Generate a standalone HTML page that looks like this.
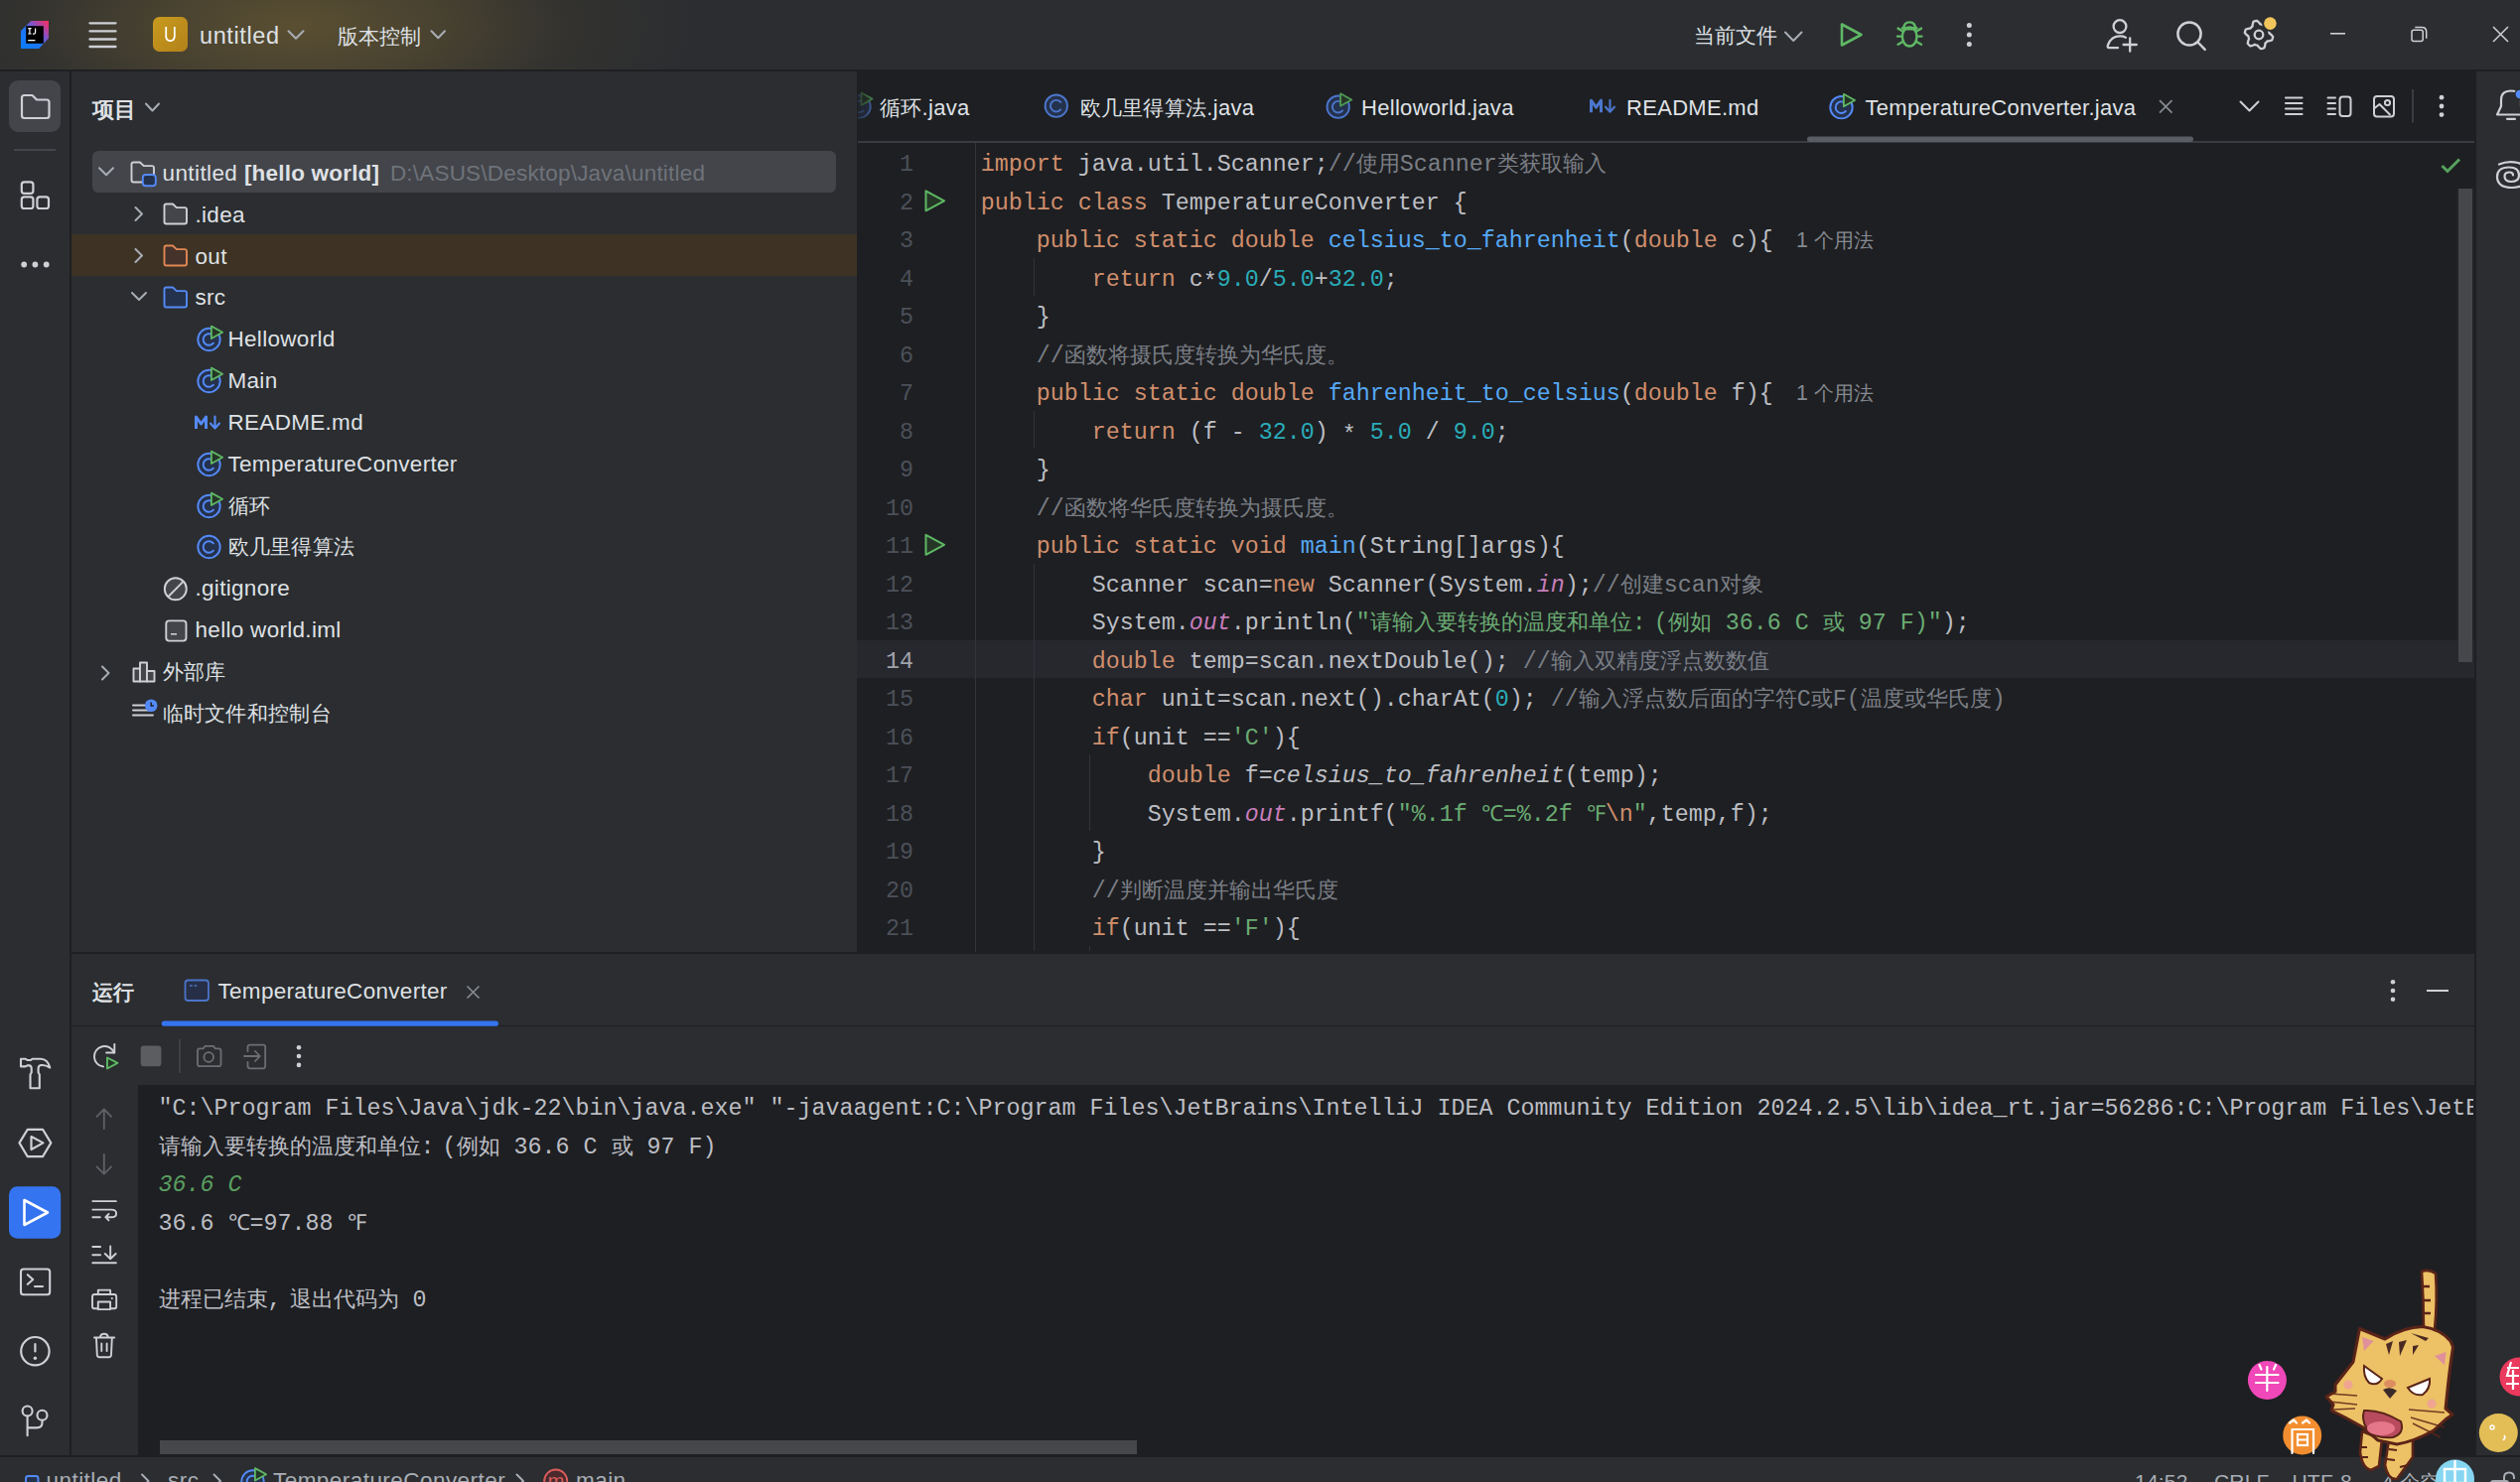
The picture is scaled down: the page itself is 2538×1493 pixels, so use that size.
<!DOCTYPE html><html><head><meta charset="utf-8"><style>
html,body{margin:0;padding:0;}
body{width:2538px;height:1493px;overflow:hidden;position:relative;background:#2B2D30;font-family:"Liberation Sans", sans-serif;}
.cj{font-size:0.935em;}
.mcj{font-size:22.1px;}
svg{overflow:visible}
</style></head><body>
<div style="position:absolute;left:0;top:0;width:2538px;height:70px;background:#2B2D30"></div>
<div style="position:absolute;left:0;top:0;width:2538px;height:70px;background:radial-gradient(ellipse 400px 160px at 300px 25px, rgba(100,86,50,0.82) 0%, rgba(92,80,48,0.6) 35%, rgba(75,66,44,0.25) 68%, rgba(60,55,40,0.0) 100%)"></div>
<div style="position:absolute;left:0px;top:70px;width:2538px;height:2px;background:#1E1F22;"></div>
<div style="position:absolute;left:0px;top:72px;width:70px;height:1396px;background:#2B2D30;"></div>
<div style="position:absolute;left:70px;top:72px;width:2px;height:1396px;background:#1E1F22;"></div>
<div style="position:absolute;left:72px;top:72px;width:791px;height:887px;background:#2B2D30;"></div>
<div style="position:absolute;left:863px;top:70px;width:1629px;height:889px;background:#1E1F22;"></div>
<div style="position:absolute;left:2492px;top:72px;width:2px;height:1396px;background:#1E1F22;"></div>
<div style="position:absolute;left:2494px;top:72px;width:44px;height:1396px;background:#2B2D30;"></div>
<div style="position:absolute;left:72px;top:959px;width:2420px;height:2px;background:#1E1F22;"></div>
<div style="position:absolute;left:72px;top:961px;width:2420px;height:72px;background:#2B2D30;"></div>
<div style="position:absolute;left:72px;top:1033px;width:2420px;height:1px;background:#1E1F22;"></div>
<div style="position:absolute;left:72px;top:1034px;width:2420px;height:59px;background:#2B2D30;"></div>
<div style="position:absolute;left:72px;top:1093px;width:2420px;height:374px;background:#1E1F22;"></div>
<div style="position:absolute;left:72px;top:1093px;width:67px;height:374px;background:#2B2D30;"></div>
<div style="position:absolute;left:0px;top:1466px;width:2538px;height:2px;background:#1E1F22;"></div>
<div style="position:absolute;left:0px;top:1468px;width:2538px;height:25px;background:#2B2D30;"></div>
<div style="position:absolute;left:72px;top:236px;width:791px;height:42px;background:#3D3223;"></div>
<div style="position:absolute;left:864px;top:142px;width:1628px;height:2px;background:#393B40;"></div>
<div style="position:absolute;left:2474px;top:190px;width:18px;height:478px;background:#222327;"></div>
<div style="position:absolute;left:863px;top:644.8px;width:1629px;height:38.5px;background:#26282E;"></div>
<div style="position:absolute;left:982px;top:144px;width:1px;height:815px;background:#313438;"></div>
<div style="position:absolute;left:1040.5px;top:259.8px;width:1.5px;height:38.5px;background:#313438;"></div>
<div style="position:absolute;left:1040.5px;top:413.8px;width:1.5px;height:38.5px;background:#313438;"></div>
<div style="position:absolute;left:1040.5px;top:567.8px;width:1.5px;height:390.2px;background:#313438;"></div>
<div style="position:absolute;left:1096.5px;top:760.3px;width:1.5px;height:77.0px;background:#313438;"></div>
<div style="position:absolute;left:1096.5px;top:952.8px;width:1.5px;height:5.2px;background:#313438;"></div>
<div style="position:absolute;left:2476px;top:190px;width:14px;height:477px;background:#46474A;"></div>
<div style="position:absolute;left:161px;top:1451px;width:984px;height:14px;background:#46474A;"></div>
<svg style="position:absolute;left:0;top:0" width="2538" height="1493" fill="none"><defs><linearGradient id="ijg" x1="0" y1="1" x2="1" y2="0"><stop offset="0" stop-color="#087CFA"/><stop offset="0.42" stop-color="#1E76F4"/><stop offset="0.68" stop-color="#8D4EBF"/><stop offset="1" stop-color="#FF2B58"/></linearGradient></defs><path d="M31.2 21 H49 V38.6 L39.2 49 H21 V31 Z" fill="url(#ijg)"/><rect x="26.2" y="26.2" width="17.6" height="17.6" fill="#000"/><path d="M28.2 28.6 h3.4 M29.9 28.6 v5.4 M28.2 34 h3.4 M35.6 28.4 v4.2 q0 1.6 -1.6 1.6 h-1" stroke="#fff" stroke-width="1.2"/><rect x="28.2" y="40" width="7.2" height="1.3" fill="#fff"/><line x1="90.5" y1="23.3" x2="116.5" y2="23.3" stroke="#CED0D6" stroke-width="2.3" stroke-linecap="round"/><line x1="90.5" y1="31.4" x2="116.5" y2="31.4" stroke="#CED0D6" stroke-width="2.3" stroke-linecap="round"/><line x1="90.5" y1="39.5" x2="116.5" y2="39.5" stroke="#CED0D6" stroke-width="2.3" stroke-linecap="round"/><line x1="90.5" y1="47.0" x2="116.5" y2="47.0" stroke="#CED0D6" stroke-width="2.3" stroke-linecap="round"/><defs><linearGradient id="ug" x1="0" y1="0" x2="1" y2="1"><stop offset="0" stop-color="#C89B1E"/><stop offset="1" stop-color="#B3811A"/></linearGradient></defs><rect x="154" y="17" width="35" height="35" rx="6.5" fill="url(#ug)"/><path d="M290.5 31.3 L298.0 38.8 L305.5 31.3" stroke="#A8ADB5" stroke-width="2" stroke-linecap="round" stroke-linejoin="round"/><path d="M434.5 31.3 L441.25 38.3 L448.0 31.3" stroke="#A8ADB5" stroke-width="2" stroke-linecap="round" stroke-linejoin="round"/><path d="M147 104.5 L153.5 111.5 L160 104.5" stroke="#A8ADB5" stroke-width="2" stroke-linecap="round" stroke-linejoin="round"/><path d="M1798 32.5 L1806.25 41.0 L1814.5 32.5" stroke="#A8ADB5" stroke-width="2" stroke-linecap="round" stroke-linejoin="round"/><path d="M1855 24.5 L1874.5 35 L1855 45.5 Z" stroke="#5FB865" stroke-width="2.6" stroke-linejoin="round"/><g stroke="#5FB865" stroke-width="2.4" stroke-linecap="round"><ellipse cx="1923.2" cy="37" rx="7.3" ry="9.5"/><path d="M1917.3 29.2 q0 -6.8 5.9 -6.8 q5.9 0 5.9 6.8 z"/><path d="M1916 28.3 h14.4"/><path d="M1911 36.6 h5 M1930.5 36.6 h5 M1911.6 28.6 l4.4 2.6 M1935 28.6 l-4.4 2.6 M1911.6 44.8 l4.4 -2.6 M1935 44.8 l-4.4 -2.6"/></g><circle cx="1983.3" cy="25.4" r="2.5" fill="#CED0D6"/><circle cx="1983.3" cy="35" r="2.5" fill="#CED0D6"/><circle cx="1983.3" cy="44.5" r="2.5" fill="#CED0D6"/><g stroke="#CED0D6" stroke-width="2.3" stroke-linecap="round" fill="none"><circle cx="2135" cy="26.6" r="6.4"/><path d="M2124.2 48.2 q-2.3 0 -1.1 -3.2 q3.4 -8.6 12 -8.6 q3.2 0 5.8 1.3 M2124.2 48.2 h8.8"/><path d="M2145.2 38.4 v13.3 M2138.6 45 h13.2"/></g><g stroke="#CED0D6" stroke-width="2.5" stroke-linecap="round" fill="none"><circle cx="2205" cy="34" r="11.6"/><path d="M2213.5 42.5 l7.2 7.4"/></g><polygon points="2287.5,35.0 2289.2,36.9 2288.8,38.7 2288.2,40.5 2285.8,41.2 2283.5,41.5 2282.6,42.6 2281.5,43.5 2281.2,45.8 2280.5,48.2 2278.7,48.8 2276.9,49.2 2275.0,47.5 2273.6,45.6 2272.2,45.3 2270.9,44.9 2268.8,45.8 2266.3,46.3 2264.9,45.1 2263.7,43.7 2264.2,41.2 2265.1,39.1 2264.7,37.8 2264.4,36.4 2262.5,35.0 2260.8,33.1 2261.2,31.3 2261.8,29.5 2264.2,28.8 2266.5,28.5 2267.4,27.4 2268.5,26.5 2268.8,24.2 2269.5,21.8 2271.3,21.2 2273.1,20.8 2275.0,22.5 2276.4,24.4 2277.8,24.7 2279.1,25.1 2281.2,24.2 2283.7,23.7 2285.1,24.9 2286.3,26.3 2285.8,28.7 2284.9,30.9 2285.3,32.2 2285.6,33.6" stroke="#CED0D6" stroke-width="2.3" stroke-linejoin="round"/><circle cx="2275" cy="35" r="4.3" stroke="#CED0D6" stroke-width="2.3"/><circle cx="2286.4" cy="23.6" r="8.4" fill="#2B2D30"/><circle cx="2286.4" cy="23.6" r="6.3" fill="#F2C55C"/><line x1="2347" y1="33.8" x2="2362" y2="33.8" stroke="#CED0D6" stroke-width="1.6"/><g stroke="#CED0D6" stroke-width="1.5" fill="none"><rect x="2429" y="30.3" width="11.2" height="11.2" rx="2"/><path d="M2432.3 27.5 h6.8 q4.6 0 4.6 4.6 v6.6"/></g><path d="M2511 27 L2526 42 M2526 27 L2511 42" stroke="#CED0D6" stroke-width="1.5"/><rect x="9" y="81" width="52" height="52" rx="9" fill="#43454A"/><path d="M22 98.5 q0 -2.5 2.5 -2.5 h8 l4.5 4.5 h10 q2.5 0 2.5 2.5 v13.5 q0 2.5 -2.5 2.5 h-22.5 q-2.5 0 -2.5 -2.5 z" stroke="#CED0D6" stroke-width="2.2" stroke-linejoin="round"/><line x1="14" y1="151" x2="56" y2="151" stroke="#43454A" stroke-width="2"/><rect x="21.8" y="183.3" width="11.6" height="11.6" rx="2.6" stroke="#CED0D6" stroke-width="2.2"/><rect x="21.8" y="198.4" width="11.6" height="11.6" rx="2.6" stroke="#CED0D6" stroke-width="2.2"/><rect x="37.4" y="198.4" width="11.6" height="11.6" rx="2.6" stroke="#CED0D6" stroke-width="2.2"/><circle cx="24.2" cy="266.5" r="2.9" fill="#CED0D6"/><circle cx="35.4" cy="266.5" r="2.9" fill="#CED0D6"/><circle cx="46.7" cy="266.5" r="2.9" fill="#CED0D6"/><rect x="93" y="152" width="749" height="42" rx="6" fill="#43454A"/><path d="M100 169.3 l7 7 l7 -7" stroke="#A8ADB5" stroke-width="2" stroke-linecap="round" stroke-linejoin="round"/><path d="M132.5 165.5 q0 -2 2 -2 h6.5 l3.8 3.6 h8.2 q2 0 2 2 v12.4 q0 2 -2 2 h-18.5 q-2 0 -2 -2 z" fill="none" stroke="#CED0D6" stroke-width="1.9" stroke-linejoin="round"/><rect x="143.8" y="176" width="13" height="11.2" rx="3" fill="#25324D" stroke="#548AF7" stroke-width="1.9"/><rect x="138" y="172.5" width="6" height="9" fill="#2B2D30" opacity="0"/><path d="M136.5 209 l6.5 6.5 l-6.5 6.5" stroke="#A8ADB5" stroke-width="2" stroke-linecap="round" stroke-linejoin="round"/><path d="M165.5 207.5 q0 -2 2 -2 h6.5 l3.8 3.6 h8.2 q2 0 2 2 v12.4 q0 2 -2 2 h-18.5 q-2 0 -2 -2 z" fill="#43454A" stroke="#CED0D6" stroke-width="1.9" stroke-linejoin="round"/><path d="M136.5 251 l6.5 6.5 l-6.5 6.5" stroke="#A8ADB5" stroke-width="2" stroke-linecap="round" stroke-linejoin="round"/><path d="M165.5 249.5 q0 -2 2 -2 h6.5 l3.8 3.6 h8.2 q2 0 2 2 v12.4 q0 2 -2 2 h-18.5 q-2 0 -2 -2 z" fill="#45322B" stroke="#E08855" stroke-width="1.9" stroke-linejoin="round"/><path d="M133 295 l7 7 l7 -7" stroke="#A8ADB5" stroke-width="2" stroke-linecap="round" stroke-linejoin="round"/><path d="M165.5 291.5 q0 -2 2 -2 h6.5 l3.8 3.6 h8.2 q2 0 2 2 v12.4 q0 2 -2 2 h-18.5 q-2 0 -2 -2 z" fill="#25324D" stroke="#548AF7" stroke-width="1.9" stroke-linejoin="round"/><circle cx="210.5" cy="342" r="11.2" fill="#25324D" stroke="#548AF7" stroke-width="1.9"/><path d="M214.94 338.27 A5.8 5.8 0 1 0 214.94 345.73" stroke="#548AF7" stroke-width="1.9" stroke-linecap="round"/><path d="M212.9 328.6 L224.1 334.8 L212.9 341.0 Z" fill="#253627" stroke="#5FB865" stroke-width="1.8" stroke-linejoin="round"/><circle cx="210.5" cy="384" r="11.2" fill="#25324D" stroke="#548AF7" stroke-width="1.9"/><path d="M214.94 380.27 A5.8 5.8 0 1 0 214.94 387.73" stroke="#548AF7" stroke-width="1.9" stroke-linecap="round"/><path d="M212.9 370.6 L224.1 376.8 L212.9 383.0 Z" fill="#253627" stroke="#5FB865" stroke-width="1.8" stroke-linejoin="round"/><circle cx="210.5" cy="468" r="11.2" fill="#25324D" stroke="#548AF7" stroke-width="1.9"/><path d="M214.94 464.27 A5.8 5.8 0 1 0 214.94 471.73" stroke="#548AF7" stroke-width="1.9" stroke-linecap="round"/><path d="M212.9 454.6 L224.1 460.8 L212.9 467.0 Z" fill="#253627" stroke="#5FB865" stroke-width="1.8" stroke-linejoin="round"/><circle cx="210.5" cy="510" r="11.2" fill="#25324D" stroke="#548AF7" stroke-width="1.9"/><path d="M214.94 506.27 A5.8 5.8 0 1 0 214.94 513.73" stroke="#548AF7" stroke-width="1.9" stroke-linecap="round"/><path d="M212.9 496.6 L224.1 502.8 L212.9 509.0 Z" fill="#253627" stroke="#5FB865" stroke-width="1.8" stroke-linejoin="round"/><circle cx="210.5" cy="551" r="11.2" fill="#25324D" stroke="#548AF7" stroke-width="1.9"/><path d="M214.94 547.27 A5.8 5.8 0 1 0 214.94 554.73" stroke="#548AF7" stroke-width="1.9" stroke-linecap="round"/><path d="M197.5 432 v-12 l5 7 l5 -7 v12" stroke="#548AF7" stroke-width="3" stroke-linejoin="round"/><path d="M216.5 419.5 v11.5 M212 426.5 l4.5 5 l4.5 -5" stroke="#548AF7" stroke-width="2.1" stroke-linecap="round" stroke-linejoin="round"/><circle cx="176.8" cy="593.3" r="11" fill="#43454A" stroke="#CED0D6" stroke-width="1.9"/><path d="M169.5 601 L184.5 585.8" stroke="#CED0D6" stroke-width="1.9"/><rect x="167.3" y="625.4" width="20.2" height="20.2" rx="3" fill="#43454A" stroke="#CED0D6" stroke-width="1.9"/><path d="M172 638.8 h6" stroke="#CED0D6" stroke-width="1.6"/><path d="M103 671.5 l6.5 6.5 l-6.5 6.5" stroke="#A8ADB5" stroke-width="2" stroke-linecap="round" stroke-linejoin="round"/><g stroke="#CED0D6" stroke-width="1.9" stroke-linejoin="round" fill="#43454A"><rect x="134.5" y="673.5" width="6.5" height="13"/><rect x="141" y="667.5" width="7" height="19"/><rect x="148" y="676" width="7.5" height="10.5"/></g><g stroke="#CED0D6" stroke-width="1.9" stroke-linecap="round"><path d="M134 710.5 h12 M134 715.5 h17 M134 720.5 h20"/></g><circle cx="152.2" cy="710.8" r="6.3" fill="#548AF7"/><path d="M152.2 707.5 v3.6 h2.6" stroke="#1E1F22" stroke-width="1.5" fill="none"/><defs><clipPath id="tabclip"><rect x="864" y="80" width="40" height="50"/></clipPath><linearGradient id="tabfade" x1="0" y1="0" x2="1" y2="0"><stop offset="0" stop-color="#fff" stop-opacity="0"/><stop offset="1" stop-color="#fff" stop-opacity="1"/></linearGradient><mask id="tabmask"><rect x="856" y="80" width="24" height="50" fill="url(#tabfade)"/></mask></defs><g clip-path="url(#tabclip)" mask="url(#tabmask)" opacity="0.75"><circle cx="865.5" cy="107.5" r="11.2" fill="#25324D" stroke="#4B76CC" stroke-width="1.9"/><path d="M869.9 103.8 A5.8 5.8 0 1 0 869.9 111.2" stroke="#4B76CC" stroke-width="1.9"/><path d="M867.5 93.5 L878.5 99.6 L867.5 106 Z" fill="#253627" stroke="#4E9A55" stroke-width="1.8" stroke-linejoin="round"/></g><circle cx="1063.8" cy="106.7" r="11.2" fill="#25324D" stroke="#4B76CC" stroke-width="1.9"/><path d="M1068.24 102.97 A5.8 5.8 0 1 0 1068.24 110.43" stroke="#4B76CC" stroke-width="1.9" stroke-linecap="round"/><circle cx="1347.7" cy="107.7" r="11.2" fill="#25324D" stroke="#4B76CC" stroke-width="1.9"/><path d="M1352.14 103.97 A5.8 5.8 0 1 0 1352.14 111.43" stroke="#4B76CC" stroke-width="1.9" stroke-linecap="round"/><path d="M1350.1000000000001 94.3 L1361.3 100.5 L1350.1000000000001 106.7 Z" fill="#253627" stroke="#4E9A55" stroke-width="1.8" stroke-linejoin="round"/><path d="M1602.5 113.2 v-12 l5 7 l5 -7 v12" stroke="#4B76CC" stroke-width="3" stroke-linejoin="round"/><path d="M1621.5 100.7 v11.5 M1617 107.7 l4.5 5 l4.5 -5" stroke="#4B76CC" stroke-width="2.1" stroke-linecap="round" stroke-linejoin="round"/><circle cx="1854.5" cy="108.2" r="11.2" fill="#25324D" stroke="#548AF7" stroke-width="1.9"/><path d="M1858.94 104.47 A5.8 5.8 0 1 0 1858.94 111.93" stroke="#548AF7" stroke-width="1.9" stroke-linecap="round"/><path d="M1856.9 94.8 L1868.1 101.0 L1856.9 107.2 Z" fill="#253627" stroke="#5FB865" stroke-width="1.8" stroke-linejoin="round"/><path d="M2175 101.2 l12.5 12.5 M2187.5 101.2 l-12.5 12.5" stroke="#868A91" stroke-width="1.7"/><rect x="1820" y="137.5" width="389" height="5.5" rx="2.75" fill="#5A5D63"/><path d="M2256.5 102.5 l9 9 l9 -9" stroke="#CED0D6" stroke-width="2" stroke-linecap="round" stroke-linejoin="round"/><g stroke="#CED0D6" stroke-width="2.1" stroke-linecap="round"><path d="M2302 98.5 h16.5 M2302 104 h16.5 M2302 109.5 h16.5 M2302 115 h16.5"/></g><g stroke="#CED0D6" stroke-width="2" stroke-linecap="round"><path d="M2344.5 98.5 h7.5 M2344.5 104 h7.5 M2344.5 109.5 h7.5 M2344.5 115 h7.5"/><rect x="2356.5" y="97.5" width="11" height="19.5" rx="3"/></g><g stroke="#CED0D6" stroke-width="2" stroke-linejoin="round"><rect x="2391" y="97" width="20" height="20.5" rx="3"/><circle cx="2404.5" cy="103.5" r="2.6"/><path d="M2391.5 109 l5 -4 l11 11"/></g><line x1="2430" y1="90" x2="2430" y2="123.5" stroke="#43454A" stroke-width="1.6"/><circle cx="2459" cy="98.2" r="2.4" fill="#CED0D6"/><circle cx="2459" cy="107" r="2.4" fill="#CED0D6"/><circle cx="2459" cy="115.6" r="2.4" fill="#CED0D6"/><path d="M2459.5 167 l5.5 5.5 l12 -12" stroke="#55A35C" stroke-width="3"/><path d="M932.5 192.29999999999998 L951 202.29999999999998 L932.5 212.29999999999998 Z" fill="#253627" stroke="#5FB865" stroke-width="2" stroke-linejoin="round"/><path d="M932.5 538.8 L951 548.8 L932.5 558.8 Z" fill="#253627" stroke="#5FB865" stroke-width="2" stroke-linejoin="round"/><path d="M21 1066.8 H25.8 L27.5 1068 H31 L32.5 1066.8 H41 Q48 1066.9 50.3 1075.6 Q46 1072.8 42 1073 Q38.8 1073.2 38.6 1076 V1080.5 L39.8 1082.5 V1096.3 H30.5 V1082.5 L31.7 1080.5 V1076 Q31.3 1073.6 29.5 1073.4 H27.5 L25.8 1074.4 H21 Z" stroke="#CED0D6" stroke-width="2.1" stroke-linejoin="round"/><g stroke="#CED0D6" stroke-width="2.2" stroke-linejoin="round"><path d="M19.5 1151.4 L27.8 1137.8 H43 L51.3 1151.4 L43 1165.2 H27.8 Z"/><path d="M31.5 1145 L43.5 1151.4 L31.5 1158 Z"/></g><rect x="9" y="1195.2" width="52.2" height="52.5" rx="8.5" fill="#3574F0"/><path d="M24.5 1209 L48 1221.5 L24.5 1234 Z" stroke="#FFFFFF" stroke-width="2.6" stroke-linejoin="round"/><g stroke="#CED0D6" stroke-width="2.1" stroke-linecap="round" stroke-linejoin="round"><rect x="21" y="1278.5" width="29.2" height="25.8" rx="2.8"/><path d="M27.8 1284.2 l5.4 4.8 l-5.4 4.8 M35 1296 h8"/></g><g stroke="#CED0D6" stroke-width="2.2" stroke-linecap="round"><circle cx="35.4" cy="1361.2" r="14.2"/><path d="M35.4 1354 v7.5"/></g><circle cx="35.4" cy="1368.2" r="1.7" fill="#CED0D6"/><g stroke="#CED0D6" stroke-width="2.1" stroke-linecap="round" fill="none"><circle cx="27.6" cy="1421.5" r="5"/><circle cx="42.5" cy="1425.8" r="5"/><path d="M27.6 1426.5 v19.8 M27.6 1438.4 h9.5 q5.4 0 5.4 -5.4 v-2.2"/></g><rect x="186.5" y="987.5" width="23.5" height="20.5" rx="3" fill="#262F45" stroke="#4C74C8" stroke-width="1.8"/><path d="M191 993 h2.8 M195.5 993 h2.8" stroke="#4C74C8" stroke-width="1.5"/><path d="M470.5 993.5 l12 12 M482.5 993.5 l-12 12" stroke="#868A91" stroke-width="1.7"/><rect x="162.8" y="1028.6" width="339.2" height="5.2" rx="2.6" fill="#3574F0"/><circle cx="2410" cy="989.3" r="2.3" fill="#CED0D6"/><circle cx="2410" cy="998" r="2.3" fill="#CED0D6"/><circle cx="2410" cy="1006.8" r="2.3" fill="#CED0D6"/><line x1="2444" y1="998" x2="2466" y2="998" stroke="#CED0D6" stroke-width="2"/><path d="M104 1074.5 A10.3 10.3 0 1 1 114.8 1060.5" stroke="#CED0D6" stroke-width="1.9" stroke-linecap="round"/><path d="M115.3 1052 v8.5 h-8.2" stroke="#CED0D6" stroke-width="1.9" stroke-linecap="round" stroke-linejoin="round"/><path d="M108 1065.5 L118.4 1070.8 L108 1076.5 Z" fill="#253627" stroke="#5FB865" stroke-width="1.9" stroke-linejoin="round"/><rect x="141.7" y="1053.5" width="20.7" height="20.8" rx="3" fill="#5C5D60"/><line x1="181" y1="1047" x2="181" y2="1081" stroke="#43454A" stroke-width="1.6"/><g stroke="#6C6E73" stroke-width="1.8" stroke-linejoin="round"><path d="M199 1058.5 q0 -2.2 2.2 -2.2 h3.6 l1.8 -2.4 h8.3 l1.8 2.4 h3.6 q2.2 0 2.2 2.2 v13.4 q0 2.2 -2.2 2.2 h-19.1 q-2.2 0 -2.2 -2.2 z"/><circle cx="210.2" cy="1065" r="4.8"/></g><g stroke="#6C6E73" stroke-width="1.8" stroke-linecap="round" stroke-linejoin="round"><path d="M249.5 1059 v-4.2 q0 -2.2 2.2 -2.2 h13.3 q2.2 0 2.2 2.2 v19.3 q0 2.2 -2.2 2.2 h-13.3 q-2.2 0 -2.2 -2.2 v-4.2 M246 1064 h15.8 M257 1059 l4.8 5 l-4.8 5"/></g><circle cx="301" cy="1055.2" r="2.3" fill="#CED0D6"/><circle cx="301" cy="1064" r="2.3" fill="#CED0D6"/><circle cx="301" cy="1072.9" r="2.3" fill="#CED0D6"/><g stroke="#5F6166" stroke-width="1.8" stroke-linecap="round" stroke-linejoin="round"><path d="M104.8 1137 v-19 M97.5 1124.8 l7.3 -7.3 l7.3 7.3"/><path d="M104.8 1162.8 v19.5 M97.5 1175.3 l7.3 7.3 l7.3 -7.3"/></g><g stroke="#CED0D6" stroke-width="1.9" stroke-linecap="round" stroke-linejoin="round"><path d="M93.3 1210.1 h23.6 M93.3 1218.6 h18.8 q5 0 5 3.8 q0 3.8 -5 3.8 h-5.6 M93.3 1226.2 h7.5 M109.5 1223 l-3.2 3.2 l3.2 3.2"/></g><g stroke="#CED0D6" stroke-width="1.9" stroke-linecap="round" stroke-linejoin="round"><path d="M93.3 1256 h7.8 M93.3 1264.2 h7.8 M93.3 1272.2 h23.6 M111.2 1255.5 v12.6 M105.8 1263 l5.4 5.3 l5.4 -5.3"/></g><g stroke="#CED0D6" stroke-width="1.9" stroke-linejoin="round"><path d="M98.8 1304 v-4.4 h12.3 v4.4 M98.8 1318.2 h-3.8 q-2 0 -2 -2 v-9.8 q0 -2.4 2.4 -2.4 h19.4 q2.4 0 2.4 2.4 v9.8 q0 2 -2 2 h-3.9"/><rect x="98.8" y="1311.5" width="12.3" height="7.6"/></g><circle cx="112.8" cy="1308" r="1.1" fill="#CED0D6"/><g stroke="#CED0D6" stroke-width="1.9" stroke-linecap="round" stroke-linejoin="round"><path d="M95 1347.5 h20.2 M101 1347.3 q0 -3.6 3.9 -3.6 q3.9 0 3.9 3.6 M97 1348 l0.8 17 q0.1 2.2 2.3 2.2 h9.6 q2.2 0 2.3 -2.2 l0.8 -17 M102.3 1353.5 v7.6 M107.6 1353.5 v7.6"/></g><g stroke="#A8ADB5" stroke-width="2" fill="none"><path d="M2522 1492 v-3.5 q0 -5 5 -5 q5 0 5 5 v1.5"/><rect x="2509" y="1492" width="17" height="12" rx="2"/></g><rect x="26" y="1487" width="12.5" height="12" rx="2.5" stroke="#548AF7" stroke-width="1.9" fill="#25324D"/><path d="M143 1485.5 l6.5 6.5 l-6.5 6.5" stroke="#A8ADB5" stroke-width="1.9" stroke-linecap="round" stroke-linejoin="round"/><path d="M215.5 1485.5 l6.5 6.5 l-6.5 6.5" stroke="#A8ADB5" stroke-width="1.9" stroke-linecap="round" stroke-linejoin="round"/><path d="M520.5 1485.5 l6.5 6.5 l-6.5 6.5" stroke="#A8ADB5" stroke-width="1.9" stroke-linecap="round" stroke-linejoin="round"/><circle cx="254.5" cy="1492.5" r="11.2" fill="#25324D" stroke="#548AF7" stroke-width="1.9"/><path d="M258.94 1488.77 A5.8 5.8 0 1 0 258.94 1496.23" stroke="#548AF7" stroke-width="1.9" stroke-linecap="round"/><path d="M256.9 1479.1 L268.1 1485.3 L256.9 1491.5 Z" fill="#253627" stroke="#5FB865" stroke-width="1.8" stroke-linejoin="round"/><circle cx="559.7" cy="1492" r="11.5" fill="#4A2A2C" stroke="#DB5C5C" stroke-width="1.9"/><g stroke="#CED0D6" stroke-width="2.2" stroke-linejoin="round" stroke-linecap="round"><path d="M2515 115.5 L2519 107 V100.5 Q2519 91.5 2529 91.5 Q2539 91.5 2539 100.5 V107 L2543 115.5 Z"/><path d="M2525 119.8 h8"/></g><circle cx="2537.8" cy="95" r="5.6" fill="#2B2D30"/><circle cx="2537.8" cy="95" r="4.2" fill="#548AF7"/><path d="M2517 165.5 Q2526 161.5 2536 164 Q2545 167 2545 177 Q2545 189 2530 189 Q2515 189 2515 178 Q2515 168.5 2527 168.5 Q2537 168.5 2537 176.5 Q2537 183 2529 183 Q2522.5 183 2522.5 177.5 Q2522.5 173.5 2527.5 173.5 Q2531 173.5 2531 176.5" stroke="#CED0D6" stroke-width="2.2" stroke-linecap="round"/></svg>
<div style="position:absolute;left:201px;top:20.11px;white-space:pre;font-family:'Liberation Sans', sans-serif;font-size:23.5px;line-height:32.9px;color:#DFE1E5;font-weight:normal;letter-spacing:0.6px;">untitled</div><div style="position:absolute;left:340px;top:20.56px;white-space:pre;font-family:'Liberation Sans', sans-serif;font-size:22.4px;line-height:31.36px;color:#DFE1E5;font-weight:normal;letter-spacing:0px;"><span class="cj">版本控制</span></div><div style="position:absolute;left:1706px;top:20.36px;white-space:pre;font-family:'Liberation Sans', sans-serif;font-size:22.4px;line-height:31.36px;color:#DFE1E5;font-weight:normal;letter-spacing:0px;"><span class="cj">当前文件</span></div><div style="position:absolute;left:154px;top:17px;width:35px;height:35px;line-height:35px;text-align:center;color:#fff;font-size:22px;font-family:'Liberation Sans',sans-serif;transform:scaleX(0.82)">U</div><div style="position:absolute;left:93px;top:93.63px;white-space:pre;font-family:'Liberation Sans', sans-serif;font-size:23px;line-height:32.2px;color:#DFE1E5;font-weight:bold;letter-spacing:0px;"><span class="cj">项目</span></div><div style="position:absolute;left:163.5px;top:158.95px;white-space:pre;font-family:'Liberation Sans', sans-serif;font-size:22.5px;line-height:31.5px;color:#DFE1E5;font-weight:normal;letter-spacing:0.4px;">untitled <b style="letter-spacing:0.2px">[hello world]</b> <span style="color:#6F737A;letter-spacing:0.2px;margin-left:4px">D:\ASUS\Desktop\Java\untitled</span></div><div style="position:absolute;left:196.5px;top:200.65px;white-space:pre;font-family:'Liberation Sans', sans-serif;font-size:22.5px;line-height:31.5px;color:#DFE1E5;font-weight:normal;letter-spacing:0.3px;">.idea</div><div style="position:absolute;left:196.5px;top:242.50px;white-space:pre;font-family:'Liberation Sans', sans-serif;font-size:22.5px;line-height:31.5px;color:#DFE1E5;font-weight:normal;letter-spacing:0.3px;">out</div><div style="position:absolute;left:196.5px;top:284.35px;white-space:pre;font-family:'Liberation Sans', sans-serif;font-size:22.5px;line-height:31.5px;color:#DFE1E5;font-weight:normal;letter-spacing:0.3px;">src</div><div style="position:absolute;left:229.5px;top:326.20px;white-space:pre;font-family:'Liberation Sans', sans-serif;font-size:22.5px;line-height:31.5px;color:#DFE1E5;font-weight:normal;letter-spacing:0.3px;">Helloworld</div><div style="position:absolute;left:229.5px;top:368.05px;white-space:pre;font-family:'Liberation Sans', sans-serif;font-size:22.5px;line-height:31.5px;color:#DFE1E5;font-weight:normal;letter-spacing:0.3px;">Main</div><div style="position:absolute;left:229.5px;top:409.90px;white-space:pre;font-family:'Liberation Sans', sans-serif;font-size:22.5px;line-height:31.5px;color:#DFE1E5;font-weight:normal;letter-spacing:0.3px;">README.md</div><div style="position:absolute;left:229.5px;top:451.75px;white-space:pre;font-family:'Liberation Sans', sans-serif;font-size:22.5px;line-height:31.5px;color:#DFE1E5;font-weight:normal;letter-spacing:0.3px;">TemperatureConverter</div><div style="position:absolute;left:229.5px;top:493.60px;white-space:pre;font-family:'Liberation Sans', sans-serif;font-size:22.5px;line-height:31.5px;color:#DFE1E5;font-weight:normal;letter-spacing:0.3px;"><span class="cj">循环</span></div><div style="position:absolute;left:229.5px;top:535.45px;white-space:pre;font-family:'Liberation Sans', sans-serif;font-size:22.5px;line-height:31.5px;color:#DFE1E5;font-weight:normal;letter-spacing:0.3px;"><span class="cj">欧几里得算法</span></div><div style="position:absolute;left:196.5px;top:577.30px;white-space:pre;font-family:'Liberation Sans', sans-serif;font-size:22.5px;line-height:31.5px;color:#DFE1E5;font-weight:normal;letter-spacing:0.3px;">.gitignore</div><div style="position:absolute;left:196.5px;top:619.15px;white-space:pre;font-family:'Liberation Sans', sans-serif;font-size:22.5px;line-height:31.5px;color:#DFE1E5;font-weight:normal;letter-spacing:0.3px;">hello world.iml</div><div style="position:absolute;left:163.5px;top:661.00px;white-space:pre;font-family:'Liberation Sans', sans-serif;font-size:22.5px;line-height:31.5px;color:#DFE1E5;font-weight:normal;letter-spacing:0.3px;"><span class="cj">外部库</span></div><div style="position:absolute;left:163.5px;top:702.85px;white-space:pre;font-family:'Liberation Sans', sans-serif;font-size:22.5px;line-height:31.5px;color:#DFE1E5;font-weight:normal;letter-spacing:0.3px;"><span class="cj">临时文件和控制台</span></div><div style="position:absolute;left:886px;top:93.68px;white-space:pre;font-family:'Liberation Sans', sans-serif;font-size:22px;line-height:30.8px;color:#DFE1E5;font-weight:normal;letter-spacing:0.3px;"><span class="cj">循环</span>.java</div><div style="position:absolute;left:1087.5px;top:93.68px;white-space:pre;font-family:'Liberation Sans', sans-serif;font-size:22px;line-height:30.8px;color:#DFE1E5;font-weight:normal;letter-spacing:0.3px;"><span class="cj">欧几里得算法</span>.java</div><div style="position:absolute;left:1371px;top:93.68px;white-space:pre;font-family:'Liberation Sans', sans-serif;font-size:22px;line-height:30.8px;color:#DFE1E5;font-weight:normal;letter-spacing:0.3px;">Helloworld.java</div><div style="position:absolute;left:1638px;top:93.68px;white-space:pre;font-family:'Liberation Sans', sans-serif;font-size:22px;line-height:30.8px;color:#DFE1E5;font-weight:normal;letter-spacing:0.3px;">README.md</div><div style="position:absolute;left:1878.5px;top:93.68px;white-space:pre;font-family:'Liberation Sans', sans-serif;font-size:22px;line-height:30.8px;color:#DFE1E5;font-weight:normal;letter-spacing:0.3px;">TemperatureConverter.java</div><div style="position:absolute;left:987.8px;top:150.15px;white-space:pre;font-family:'Liberation Mono', monospace;font-size:23.3333px;line-height:32.67px;color:#DFE1E5;font-weight:normal;letter-spacing:0px;"><span style="color:#CF8E6D">import</span><span style="color:#BCBEC4"> java.util.Scanner;</span><span style="color:#7A7E85">//<span class="mcj">使用</span>Scanner<span class="mcj">类获取输入</span></span></div><div style="position:absolute;left:906px;top:150.15px;white-space:pre;font-family:'Liberation Mono', monospace;font-size:23.3333px;line-height:32.67px;color:#4B5059;font-weight:normal;letter-spacing:0px;">1</div><div style="position:absolute;left:987.8px;top:188.65px;white-space:pre;font-family:'Liberation Mono', monospace;font-size:23.3333px;line-height:32.67px;color:#DFE1E5;font-weight:normal;letter-spacing:0px;"><span style="color:#CF8E6D">public class</span><span style="color:#BCBEC4"> TemperatureConverter {</span></div><div style="position:absolute;left:906px;top:188.65px;white-space:pre;font-family:'Liberation Mono', monospace;font-size:23.3333px;line-height:32.67px;color:#4B5059;font-weight:normal;letter-spacing:0px;">2</div><div style="position:absolute;left:987.8px;top:227.15px;white-space:pre;font-family:'Liberation Mono', monospace;font-size:23.3333px;line-height:32.67px;color:#DFE1E5;font-weight:normal;letter-spacing:0px;"><span style="color:#BCBEC4">    </span><span style="color:#CF8E6D">public static double</span><span style="color:#BCBEC4"> </span><span style="color:#56A8F5">celsius_to_fahrenheit</span><span style="color:#BCBEC4">(</span><span style="color:#CF8E6D">double</span><span style="color:#BCBEC4"> c){</span></div><div style="position:absolute;left:906px;top:227.15px;white-space:pre;font-family:'Liberation Mono', monospace;font-size:23.3333px;line-height:32.67px;color:#4B5059;font-weight:normal;letter-spacing:0px;">3</div><div style="position:absolute;left:987.8px;top:265.65px;white-space:pre;font-family:'Liberation Mono', monospace;font-size:23.3333px;line-height:32.67px;color:#DFE1E5;font-weight:normal;letter-spacing:0px;"><span style="color:#BCBEC4">        </span><span style="color:#CF8E6D">return</span><span style="color:#BCBEC4"> c<span style="position:relative;top:3px">*</span></span><span style="color:#2AACB8">9.0</span><span style="color:#BCBEC4">/</span><span style="color:#2AACB8">5.0</span><span style="color:#BCBEC4">+</span><span style="color:#2AACB8">32.0</span><span style="color:#BCBEC4">;</span></div><div style="position:absolute;left:906px;top:265.65px;white-space:pre;font-family:'Liberation Mono', monospace;font-size:23.3333px;line-height:32.67px;color:#4B5059;font-weight:normal;letter-spacing:0px;">4</div><div style="position:absolute;left:987.8px;top:304.15px;white-space:pre;font-family:'Liberation Mono', monospace;font-size:23.3333px;line-height:32.67px;color:#DFE1E5;font-weight:normal;letter-spacing:0px;"><span style="color:#BCBEC4">    }</span></div><div style="position:absolute;left:906px;top:304.15px;white-space:pre;font-family:'Liberation Mono', monospace;font-size:23.3333px;line-height:32.67px;color:#4B5059;font-weight:normal;letter-spacing:0px;">5</div><div style="position:absolute;left:987.8px;top:342.65px;white-space:pre;font-family:'Liberation Mono', monospace;font-size:23.3333px;line-height:32.67px;color:#DFE1E5;font-weight:normal;letter-spacing:0px;"><span style="color:#BCBEC4">    </span><span style="color:#7A7E85">//<span class="mcj">函数将摄氏度转换为华氏度。</span></span></div><div style="position:absolute;left:906px;top:342.65px;white-space:pre;font-family:'Liberation Mono', monospace;font-size:23.3333px;line-height:32.67px;color:#4B5059;font-weight:normal;letter-spacing:0px;">6</div><div style="position:absolute;left:987.8px;top:381.15px;white-space:pre;font-family:'Liberation Mono', monospace;font-size:23.3333px;line-height:32.67px;color:#DFE1E5;font-weight:normal;letter-spacing:0px;"><span style="color:#BCBEC4">    </span><span style="color:#CF8E6D">public static double</span><span style="color:#BCBEC4"> </span><span style="color:#56A8F5">fahrenheit_to_celsius</span><span style="color:#BCBEC4">(</span><span style="color:#CF8E6D">double</span><span style="color:#BCBEC4"> f){</span></div><div style="position:absolute;left:906px;top:381.15px;white-space:pre;font-family:'Liberation Mono', monospace;font-size:23.3333px;line-height:32.67px;color:#4B5059;font-weight:normal;letter-spacing:0px;">7</div><div style="position:absolute;left:987.8px;top:419.65px;white-space:pre;font-family:'Liberation Mono', monospace;font-size:23.3333px;line-height:32.67px;color:#DFE1E5;font-weight:normal;letter-spacing:0px;"><span style="color:#BCBEC4">        </span><span style="color:#CF8E6D">return</span><span style="color:#BCBEC4"> (f - </span><span style="color:#2AACB8">32.0</span><span style="color:#BCBEC4">) <span style="position:relative;top:3px">*</span> </span><span style="color:#2AACB8">5.0</span><span style="color:#BCBEC4"> / </span><span style="color:#2AACB8">9.0</span><span style="color:#BCBEC4">;</span></div><div style="position:absolute;left:906px;top:419.65px;white-space:pre;font-family:'Liberation Mono', monospace;font-size:23.3333px;line-height:32.67px;color:#4B5059;font-weight:normal;letter-spacing:0px;">8</div><div style="position:absolute;left:987.8px;top:458.15px;white-space:pre;font-family:'Liberation Mono', monospace;font-size:23.3333px;line-height:32.67px;color:#DFE1E5;font-weight:normal;letter-spacing:0px;"><span style="color:#BCBEC4">    }</span></div><div style="position:absolute;left:906px;top:458.15px;white-space:pre;font-family:'Liberation Mono', monospace;font-size:23.3333px;line-height:32.67px;color:#4B5059;font-weight:normal;letter-spacing:0px;">9</div><div style="position:absolute;left:987.8px;top:496.65px;white-space:pre;font-family:'Liberation Mono', monospace;font-size:23.3333px;line-height:32.67px;color:#DFE1E5;font-weight:normal;letter-spacing:0px;"><span style="color:#BCBEC4">    </span><span style="color:#7A7E85">//<span class="mcj">函数将华氏度转换为摄氏度。</span></span></div><div style="position:absolute;left:892px;top:496.65px;white-space:pre;font-family:'Liberation Mono', monospace;font-size:23.3333px;line-height:32.67px;color:#4B5059;font-weight:normal;letter-spacing:0px;">10</div><div style="position:absolute;left:987.8px;top:535.15px;white-space:pre;font-family:'Liberation Mono', monospace;font-size:23.3333px;line-height:32.67px;color:#DFE1E5;font-weight:normal;letter-spacing:0px;"><span style="color:#BCBEC4">    </span><span style="color:#CF8E6D">public static void</span><span style="color:#BCBEC4"> </span><span style="color:#56A8F5">main</span><span style="color:#BCBEC4">(String[]args){</span></div><div style="position:absolute;left:892px;top:535.15px;white-space:pre;font-family:'Liberation Mono', monospace;font-size:23.3333px;line-height:32.67px;color:#4B5059;font-weight:normal;letter-spacing:0px;">11</div><div style="position:absolute;left:987.8px;top:573.65px;white-space:pre;font-family:'Liberation Mono', monospace;font-size:23.3333px;line-height:32.67px;color:#DFE1E5;font-weight:normal;letter-spacing:0px;"><span style="color:#BCBEC4">        Scanner scan=</span><span style="color:#CF8E6D">new</span><span style="color:#BCBEC4"> Scanner(System.</span><span style="color:#C77DBB;font-style:italic">in</span><span style="color:#BCBEC4">);</span><span style="color:#7A7E85">//<span class="mcj">创建</span>scan<span class="mcj">对象</span></span></div><div style="position:absolute;left:892px;top:573.65px;white-space:pre;font-family:'Liberation Mono', monospace;font-size:23.3333px;line-height:32.67px;color:#4B5059;font-weight:normal;letter-spacing:0px;">12</div><div style="position:absolute;left:987.8px;top:612.15px;white-space:pre;font-family:'Liberation Mono', monospace;font-size:23.3333px;line-height:32.67px;color:#DFE1E5;font-weight:normal;letter-spacing:0px;"><span style="color:#BCBEC4">        System.</span><span style="color:#C77DBB;font-style:italic">out</span><span style="color:#BCBEC4">.println(</span><span style="color:#6AAB73">"<span class="mcj">请输入要转换的温度和单位</span><span style="display:inline-block;width:22px">:</span>(<span class="mcj">例如</span> 36.6 C <span class="mcj">或</span> 97 F)"</span><span style="color:#BCBEC4">);</span></div><div style="position:absolute;left:892px;top:612.15px;white-space:pre;font-family:'Liberation Mono', monospace;font-size:23.3333px;line-height:32.67px;color:#4B5059;font-weight:normal;letter-spacing:0px;">13</div><div style="position:absolute;left:987.8px;top:650.65px;white-space:pre;font-family:'Liberation Mono', monospace;font-size:23.3333px;line-height:32.67px;color:#DFE1E5;font-weight:normal;letter-spacing:0px;"><span style="color:#BCBEC4">        </span><span style="color:#CF8E6D">double</span><span style="color:#BCBEC4"> temp=scan.nextDouble(); </span><span style="color:#7A7E85">//<span class="mcj">输入双精度浮点数数值</span></span></div><div style="position:absolute;left:892px;top:650.65px;white-space:pre;font-family:'Liberation Mono', monospace;font-size:23.3333px;line-height:32.67px;color:#A1A3AB;font-weight:normal;letter-spacing:0px;">14</div><div style="position:absolute;left:987.8px;top:689.15px;white-space:pre;font-family:'Liberation Mono', monospace;font-size:23.3333px;line-height:32.67px;color:#DFE1E5;font-weight:normal;letter-spacing:0px;"><span style="color:#BCBEC4">        </span><span style="color:#CF8E6D">char</span><span style="color:#BCBEC4"> unit=scan.next().charAt(</span><span style="color:#2AACB8">0</span><span style="color:#BCBEC4">); </span><span style="color:#7A7E85">//<span class="mcj">输入浮点数后面的字符</span>C<span class="mcj">或</span>F(<span class="mcj">温度或华氏度</span>)</span></div><div style="position:absolute;left:892px;top:689.15px;white-space:pre;font-family:'Liberation Mono', monospace;font-size:23.3333px;line-height:32.67px;color:#4B5059;font-weight:normal;letter-spacing:0px;">15</div><div style="position:absolute;left:987.8px;top:727.65px;white-space:pre;font-family:'Liberation Mono', monospace;font-size:23.3333px;line-height:32.67px;color:#DFE1E5;font-weight:normal;letter-spacing:0px;"><span style="color:#BCBEC4">        </span><span style="color:#CF8E6D">if</span><span style="color:#BCBEC4">(unit ==</span><span style="color:#6AAB73">'C'</span><span style="color:#BCBEC4">){</span></div><div style="position:absolute;left:892px;top:727.65px;white-space:pre;font-family:'Liberation Mono', monospace;font-size:23.3333px;line-height:32.67px;color:#4B5059;font-weight:normal;letter-spacing:0px;">16</div><div style="position:absolute;left:987.8px;top:766.15px;white-space:pre;font-family:'Liberation Mono', monospace;font-size:23.3333px;line-height:32.67px;color:#DFE1E5;font-weight:normal;letter-spacing:0px;"><span style="color:#BCBEC4">            </span><span style="color:#CF8E6D">double</span><span style="color:#BCBEC4"> f=</span><span style="color:#BCBEC4;font-style:italic">celsius_to_fahrenheit</span><span style="color:#BCBEC4">(temp);</span></div><div style="position:absolute;left:892px;top:766.15px;white-space:pre;font-family:'Liberation Mono', monospace;font-size:23.3333px;line-height:32.67px;color:#4B5059;font-weight:normal;letter-spacing:0px;">17</div><div style="position:absolute;left:987.8px;top:804.65px;white-space:pre;font-family:'Liberation Mono', monospace;font-size:23.3333px;line-height:32.67px;color:#DFE1E5;font-weight:normal;letter-spacing:0px;"><span style="color:#BCBEC4">            System.</span><span style="color:#C77DBB;font-style:italic">out</span><span style="color:#BCBEC4">.printf(</span><span style="color:#6AAB73">"%.1f <span class="mcj">℃</span>=%.2f <span class="mcj">℉</span></span><span style="color:#CF8E6D">\n</span><span style="color:#6AAB73">"</span><span style="color:#BCBEC4">,temp,f);</span></div><div style="position:absolute;left:892px;top:804.65px;white-space:pre;font-family:'Liberation Mono', monospace;font-size:23.3333px;line-height:32.67px;color:#4B5059;font-weight:normal;letter-spacing:0px;">18</div><div style="position:absolute;left:987.8px;top:843.15px;white-space:pre;font-family:'Liberation Mono', monospace;font-size:23.3333px;line-height:32.67px;color:#DFE1E5;font-weight:normal;letter-spacing:0px;"><span style="color:#BCBEC4">        }</span></div><div style="position:absolute;left:892px;top:843.15px;white-space:pre;font-family:'Liberation Mono', monospace;font-size:23.3333px;line-height:32.67px;color:#4B5059;font-weight:normal;letter-spacing:0px;">19</div><div style="position:absolute;left:987.8px;top:881.65px;white-space:pre;font-family:'Liberation Mono', monospace;font-size:23.3333px;line-height:32.67px;color:#DFE1E5;font-weight:normal;letter-spacing:0px;"><span style="color:#BCBEC4">        </span><span style="color:#7A7E85">//<span class="mcj">判断温度并输出华氏度</span></span></div><div style="position:absolute;left:892px;top:881.65px;white-space:pre;font-family:'Liberation Mono', monospace;font-size:23.3333px;line-height:32.67px;color:#4B5059;font-weight:normal;letter-spacing:0px;">20</div><div style="position:absolute;left:987.8px;top:920.15px;white-space:pre;font-family:'Liberation Mono', monospace;font-size:23.3333px;line-height:32.67px;color:#DFE1E5;font-weight:normal;letter-spacing:0px;"><span style="color:#BCBEC4">        </span><span style="color:#CF8E6D">if</span><span style="color:#BCBEC4">(unit ==</span><span style="color:#6AAB73">'F'</span><span style="color:#BCBEC4">){</span></div><div style="position:absolute;left:892px;top:920.15px;white-space:pre;font-family:'Liberation Mono', monospace;font-size:23.3333px;line-height:32.67px;color:#4B5059;font-weight:normal;letter-spacing:0px;">21</div><div style="position:absolute;left:1809px;top:227.00px;white-space:pre;font-family:'Liberation Sans', sans-serif;font-size:21.5px;line-height:30.1px;color:#868A91;font-weight:normal;letter-spacing:0px;">1 <span class="cj">个用法</span></div><div style="position:absolute;left:1809px;top:380.60px;white-space:pre;font-family:'Liberation Sans', sans-serif;font-size:21.5px;line-height:30.1px;color:#868A91;font-weight:normal;letter-spacing:0px;">1 <span class="cj">个用法</span></div><div style="position:absolute;left:93px;top:984.27px;white-space:pre;font-family:'Liberation Sans', sans-serif;font-size:22.2px;line-height:31.08px;color:#DFE1E5;font-weight:bold;letter-spacing:0px;"><span class="cj">运行</span></div><div style="position:absolute;left:219.5px;top:982.75px;white-space:pre;font-family:'Liberation Sans', sans-serif;font-size:22.5px;line-height:31.5px;color:#DFE1E5;font-weight:normal;letter-spacing:0.3px;">TemperatureConverter</div><div style="position:absolute;left:0;top:0;width:2491px;height:1466px;overflow:hidden"><div style="position:absolute;left:159.5px;top:1101.45px;white-space:pre;font-family:'Liberation Mono', monospace;font-size:23.3333px;line-height:32.67px;color:#DFE1E5;font-weight:normal;letter-spacing:0px;"><span style="color:#BCBEC4">"C:\Program Files\Java\jdk-22\bin\java.exe" "-javaagent:C:\Program Files\JetBrains\IntelliJ IDEA Community Edition 2024.2.5\lib\idea_rt.jar=56286:C:\Program Files\JetBrains\IntelliJ IDEA Community Edition 2024.2.5\bin"</span></div><div style="position:absolute;left:159.5px;top:1139.95px;white-space:pre;font-family:'Liberation Mono', monospace;font-size:23.3333px;line-height:32.67px;color:#DFE1E5;font-weight:normal;letter-spacing:0px;"><span style="color:#BCBEC4"><span class="mcj">请输入要转换的温度和单位</span><span style="display:inline-block;width:22px">:</span>(<span class="mcj">例如</span> 36.6 C <span class="mcj">或</span> 97 F)</span></div><div style="position:absolute;left:159.5px;top:1178.45px;white-space:pre;font-family:'Liberation Mono', monospace;font-size:23.3333px;line-height:32.67px;color:#DFE1E5;font-weight:normal;letter-spacing:0px;"><span style="color:#5A9E60;font-style:italic">36.6 C</span></div><div style="position:absolute;left:159.5px;top:1216.95px;white-space:pre;font-family:'Liberation Mono', monospace;font-size:23.3333px;line-height:32.67px;color:#DFE1E5;font-weight:normal;letter-spacing:0px;"><span style="color:#BCBEC4">36.6 <span class="mcj">℃</span>=97.88 <span class="mcj">℉</span></span></div><div style="position:absolute;left:159.5px;top:1293.95px;white-space:pre;font-family:'Liberation Mono', monospace;font-size:23.3333px;line-height:32.67px;color:#DFE1E5;font-weight:normal;letter-spacing:0px;"><span style="color:#BCBEC4"><span class="mcj">进程已结束</span><span style="display:inline-block;width:22px">,</span><span class="mcj">退出代码为</span> 0</span></div></div><div style="position:absolute;left:46.5px;top:1475.95px;white-space:pre;font-family:'Liberation Sans', sans-serif;font-size:22.5px;line-height:31.5px;color:#A8ADB5;font-weight:normal;letter-spacing:0.45px;">untitled</div><div style="position:absolute;left:169px;top:1475.95px;white-space:pre;font-family:'Liberation Sans', sans-serif;font-size:22.5px;line-height:31.5px;color:#A8ADB5;font-weight:normal;letter-spacing:0.45px;">src</div><div style="position:absolute;left:275px;top:1475.95px;white-space:pre;font-family:'Liberation Sans', sans-serif;font-size:22.5px;line-height:31.5px;color:#A8ADB5;font-weight:normal;letter-spacing:0.45px;">TemperatureConverter</div><div style="position:absolute;left:580px;top:1475.95px;white-space:pre;font-family:'Liberation Sans', sans-serif;font-size:22.5px;line-height:31.5px;color:#A8ADB5;font-weight:normal;letter-spacing:0.45px;">main</div><div style="position:absolute;left:549px;top:1479px;width:22px;text-align:center;font-family:'Liberation Sans',sans-serif;font-size:20px;line-height:26px;color:#DB5C5C">m</div><div style="position:absolute;left:2150px;top:1477.52px;white-space:pre;font-family:'Liberation Sans', sans-serif;font-size:21px;line-height:29.4px;color:#A8ADB5;font-weight:normal;letter-spacing:0.2px;">14:52</div><div style="position:absolute;left:2230px;top:1477.52px;white-space:pre;font-family:'Liberation Sans', sans-serif;font-size:21px;line-height:29.4px;color:#A8ADB5;font-weight:normal;letter-spacing:0.2px;">CRLF</div><div style="position:absolute;left:2308.5px;top:1477.52px;white-space:pre;font-family:'Liberation Sans', sans-serif;font-size:21px;line-height:29.4px;color:#A8ADB5;font-weight:normal;letter-spacing:0.2px;">UTF-8</div><div style="position:absolute;left:2399px;top:1477.52px;white-space:pre;font-family:'Liberation Sans', sans-serif;font-size:21px;line-height:29.4px;color:#A8ADB5;font-weight:normal;letter-spacing:0.2px;">4 <span class="cj">个空格</span></div>
<svg style="position:absolute;left:0;top:0" width="2538" height="1493" fill="none"><circle cx="2283.4" cy="1390.4" r="19.5" fill="#F048B8"/><g stroke="#fff" stroke-width="2.2" stroke-linecap="round"><path d="M2275.5 1375 l2 4.5 M2292 1375 l-2 4.5 M2272 1385 h22.5 M2272 1393 h22.5 M2283.3 1377 v24"/></g><circle cx="2318.7" cy="1446" r="19.5" fill="#F28E2F"/><g stroke="#fff" stroke-width="2.2" stroke-linecap="round" fill="none"><path d="M2306 1433.5 l4 -3 l3 3 M2319 1433.5 l4 -3 l3 3"/><path d="M2308.5 1464 v-24 M2330 1464 v-24 h-21.5"/><rect x="2314" y="1445" width="10" height="11"/><path d="M2314 1450.5 h10"/></g><circle cx="2516.3" cy="1443.4" r="19.5" fill="#E3BE56"/><circle cx="2510" cy="1438" r="2" fill="none" stroke="#fff" stroke-width="1.4"/><path d="M2522 1446 q2 2 -1 5" stroke="#fff" stroke-width="1.6" fill="none"/><circle cx="2537" cy="1387" r="19.5" fill="#EA3A5E"/><g stroke="#fff" stroke-width="2.2" fill="none"><path d="M2525 1378 h12 M2529 1372 l-4 14 h12 M2531 1380 v20 M2524 1394 h13"/></g><circle cx="2472.5" cy="1490" r="19.5" fill="#86D6F2"/><g stroke="#fff" stroke-width="2.4" fill="none"><rect x="2462" y="1480" width="21" height="14"/><path d="M2472.5 1471 v25"/></g><path d="M2439 1281 Q2446 1278 2453 1283 Q2455 1310 2452 1340 L2441 1340 Q2441 1310 2439 1281 Z" fill="#EDC166" stroke="#5A2418" stroke-width="2.6" stroke-linejoin="round"/><g stroke="#5A2418" stroke-width="2.4"><path d="M2440 1296 h7 M2441 1310 h7 M2441 1323 h7"/></g><path d="M2379 1442 L2377 1463 Q2379 1479 2388 1481 L2396 1477 L2399 1450 Z" fill="#EDC166" stroke="#5A2418" stroke-width="2.6" stroke-linejoin="round"/><path d="M2406 1450 L2402 1476 Q2405 1491 2414 1490 L2430 1468 L2430 1446 Z" fill="#EDC166" stroke="#5A2418" stroke-width="2.6" stroke-linejoin="round"/><g stroke="#5A2418" stroke-width="2.2"><path d="M2378 1458 h6 M2379 1468 h6 M2404 1470 l8 1 M2406 1460 l8 1 M2417 1478 l8 -2"/></g><path d="M2376.5 1338.5 L2402 1349 Q2420 1337 2440 1336.5 Q2458 1339 2468 1351 L2470.5 1357 Q2467 1380 2465 1400 L2463 1419 L2470 1425 L2463 1430 L2451 1441 Q2432 1452 2414 1455 L2395 1451 L2380 1438 L2362 1428 L2348 1421 L2350 1415 L2343 1407 L2352 1402 L2352 1395 L2370 1372 Z" fill="#EDC166" stroke="#5A2418" stroke-width="3" stroke-linejoin="round"/><path d="M2379 1347 L2390.5 1351 L2381 1361 Z" fill="#E0909A"/><path d="M2463.5 1362 L2452 1366 L2462 1375 Z" fill="#E0909A"/><g fill="#4A2A22"><path d="M2403 1354 l7 -3 l-4 14 z"/><path d="M2416 1352 l8 -2 l-7 16 z"/><path d="M2430 1356 l6 -1 l-6 10 z"/><path d="M2428 1343 l18 5 l-3 3 z"/></g><path d="M2381 1376 L2399 1389 Q2394 1397 2386 1393 Q2380 1387 2381 1376 Z" fill="#FFFFFF" stroke="#5A2418" stroke-width="2"/><path d="M2447 1389 L2425 1398 Q2431 1407 2440 1405 Q2448 1399 2447 1389 Z" fill="#FFFFFF" stroke="#5A2418" stroke-width="2"/><ellipse cx="2407" cy="1394" rx="6" ry="4" fill="#D98060" opacity="0.8"/><path d="M2400 1400 Q2407 1396 2414 1401 L2407 1409 Z" fill="#3A2A2A"/><path d="M2381 1421 Q2398 1420 2418 1432 Q2422 1444 2410 1448 Q2392 1450 2384 1440 Q2378 1430 2381 1421 Z" fill="#B84C5E" stroke="#5A2418" stroke-width="2"/><ellipse cx="2398" cy="1439" rx="14" ry="7" fill="#E6778A"/><circle cx="2365" cy="1395" r="4.5" fill="#F09AA0" opacity="0.75"/><circle cx="2449" cy="1414" r="4.5" fill="#F09AA0" opacity="0.75"/><g stroke="#5A2418" stroke-width="1.5" opacity="0.85"><path d="M2346 1404 l28 2 M2346 1412 l28 3 M2350 1420 l22 -1 M2426 1420 l36 3 M2428 1428 l34 10 M2430 1434 l28 14"/></g></svg>
</body></html>
